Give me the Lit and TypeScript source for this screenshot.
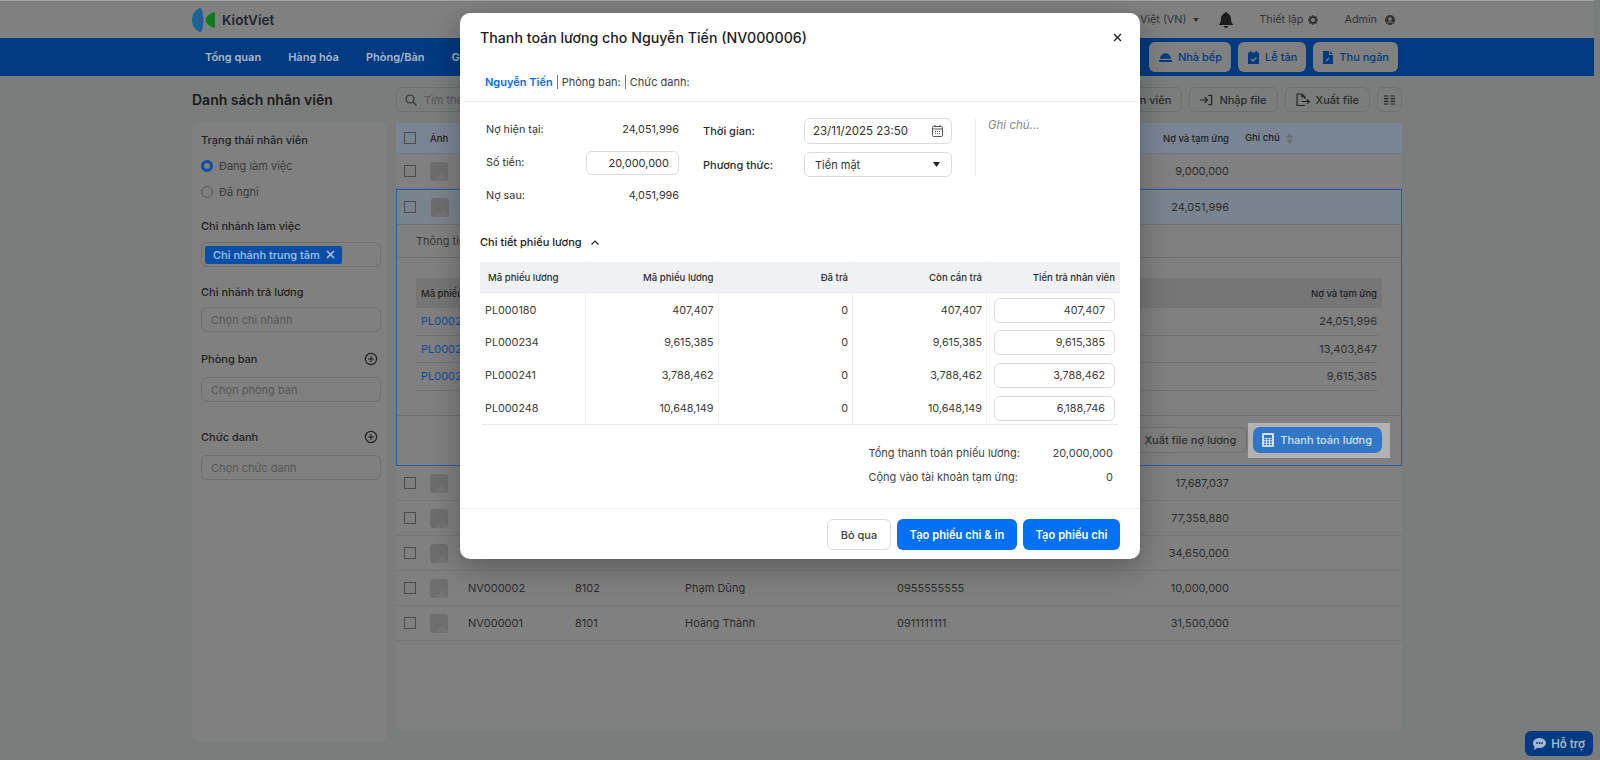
import { LitElement, html, css } from "lit";
import { customElement } from "lit/decorators.js";

const thumb = html`<span class="thumb"><svg viewBox="0 0 18 19" width="18" height="19"><path d="M5 19 L12 11 L18 17 V19Z" fill="#747474"/></svg></span>`;
const box = html`<span class="cb"></span>`;
const plus = html`<svg class="plus" viewBox="0 0 14 14" width="14" height="14" fill="none" stroke="#222" stroke-width="1.2"><circle cx="7" cy="7" r="5.6"/><path d="M7 4v6M4 7h6"/></svg>`;

const slips = [
  ["PL000180", "407,407", "0", "407,407", "407,407"],
  ["PL000234", "9,615,385", "0", "9,615,385", "9,615,385"],
  ["PL000241", "3,788,462", "0", "3,788,462", "3,788,462"],
  ["PL000248", "10,648,149", "0", "10,648,149", "6,188,746"],
];

@customElement("app-root")
export class AppRoot extends LitElement {
  static styles = css`
    :host { display: block; position: relative; width: 1600px; height: 760px; overflow: hidden; background: #7b7d7d; font-family: Inter, "Noto Sans", sans-serif; color: #262626; font-size: 11px; }
    * { box-sizing: border-box; }
    .page { width: 1594px; height: 760px; border-top: 1px solid #a2a2a2; }
    .top { height: 37px; background: #808080; display: flex; align-items: center; padding-left: 192px; }
    .logo { display: flex; align-items: center; gap: 7px; font-size: 13.5px; font-weight: 600; color: #1c2530; }
    .top-right { margin-left: auto; display: flex; align-items: center; padding-right: 199px; font-size: 10.8px; color: #333; }
    .nowrap { white-space: nowrap; }
    .lang { display: flex; align-items: center; gap: 7px; margin-right: 20px; }
    .lang i { border: 3.5px solid transparent; border-top: 4px solid #333; border-bottom: 0; width: 0; height: 0; display: block; }
    .bell { margin-right: 26px; display: block; }
    .meta { display: flex; align-items: center; gap: 5px; }
    .meta + .meta { margin-left: 26px; gap: 8px; }
    .nav { height: 38px; background: #003a80; display: flex; align-items: center; padding-left: 205px; padding-right: 196px; color: #a9b8cb; font-weight: 600; font-size: 11px; }
    .nav .links { display: flex; gap: 27px; }
    .nav .btns { margin-left: auto; display: flex; gap: 7px; }
    .nbtn { height: 30px; border-radius: 6px; background: #808080; color: #003a80; font-weight: 500; font-size: 11px; display: flex; align-items: center; gap: 6px; padding: 0 9px 0 10px; }
    .content { display: grid; grid-template-columns: 195px 1006px; column-gap: 9px; padding: 11px 0 0 192px; }
    .title { font-size: 14px; font-weight: 600; color: #1a1a1a; align-self: center; }
    .tools { display: flex; gap: 7px; height: 25px; }
    .search { flex: 1; border: 1px solid #6f7171; border-radius: 6px; display: flex; align-items: center; gap: 7px; padding-left: 8px; color: #555; }
    .tbtn { border: 1px solid #6f7171; border-radius: 6px; display: flex; align-items: center; gap: 6px; padding: 0 10px; font-weight: 500; color: #2a2a2a; font-size: 11px; }
    .tbtn.ic { padding: 0 6px; }
    .side { grid-row: 2; margin-top: 10px; height: 620px; background: #808080; border-radius: 8px; padding: 10px 6px 0 9px; }
    .lb { font-weight: 500; color: #222; height: 16px; line-height: 16px; display: flex; justify-content: space-between; align-items: center; padding-right: 3px; }
    .radio { display: flex; align-items: center; gap: 6px; color: #3c3c3c; height: 16px; margin-top: 10px; }
    .radio i { width: 12px; height: 12px; border-radius: 50%; border: 1px solid #555; display: block; }
    .radio i.on { border: 3.5px solid #0b4ea6; background: #808080; }
    .inp { height: 25px; border: 1px solid #6f7171; border-radius: 6px; display: flex; align-items: center; padding-left: 9px; color: #565656; }
    .inp.tagged { padding-left: 3px; margin-top: 8px; }
    .tag { height: 18px; background: #0b4ea6; color: #a3c4ee; border-radius: 2px; padding: 0 7px 0 8px; display: flex; align-items: center; gap: 6px; font-weight: 500; }
    .s1 { margin-top: 18px; } .s2 { margin-top: 17px; } .s3 { margin-top: 19px; } .s4 { margin-top: 27px; }
    .i2 { margin-top: 7px; } .i3 { margin-top: 10px; }
    .table { grid-row: 2; grid-column: 2; margin-top: 11px; height: 607px; background: #808080; border-radius: 0 0 6px 6px; color: #2c2c2c; }
    .row { display: grid; grid-template-columns: 26px 38px 107px 110px 212px 1fr 173px; align-items: center; height: 35px; padding-left: 8px; border-bottom: 1px solid #767878; }
    .row.head { height: 31px; background: #7a8594; font-weight: 500; font-size: 9.5px; color: #202020; border-bottom: 1px solid #6f7b8c; }
    .row .num { text-align: right; }
    .row .dual { display: flex; justify-content: space-between; }
    .row .note { padding-left: 16px; }
    .cb { width: 12px; height: 12px; border: 1px solid #4c4c4c; display: block; }
    .thumb { width: 18px; height: 19px; background: #6e6e6e; border-radius: 3px; display: block; overflow: hidden; }
    .sorti { vertical-align: middle; margin-left: 4px; }
    .exp { border: 1px solid #2f5c9f; height: 277px; }
    .exp .row { background: #7a848e; padding-left: 7px; height: 35px; border-bottom: 1px solid #727474; grid-template-columns: 27px 38px 107px 110px 212px 1fr 172px; }
    .tabs { height: 33px; padding-left: 19px; display: flex; align-items: center; color: #3a3a3a; border-bottom: 1px solid #707272; font-size: 11px; }
    .inner { margin: 20px 19px 0; color: #2e2e2e; }
    .ih { height: 30px; background: #767676; display: flex; justify-content: space-between; align-items: center; padding: 0 5px; font-weight: 500; font-size: 9.5px; color: #1f1f1f; }
    .ir { height: 27.5px; display: flex; justify-content: space-between; align-items: center; padding: 0 1px 0 5px; margin-right: 4px; border-bottom: 1px solid #727474; }
    .ir a { color: #0f4e9b; }
    .exp-foot { margin-top: 24px; border-top: 1px solid #707272; height: 50px; display: flex; justify-content: flex-end; align-items: center; padding-right: 11px; }
    .xf { height: 26px; border: 1px solid #6f7171; border-radius: 6px; display: flex; align-items: center; padding: 0 10px; font-weight: 500; color: #303030; }
    .hl { background: #b2b2b2; padding: 4px 8px 5px 5px; height: 35px; margin-left: 1px; }
    .pay { height: 26px; background: #3277c7; color: #d2e0f0; border-radius: 7px; display: flex; align-items: center; gap: 6px; padding: 0 10px 0 9px; font-weight: 500; font-size: 11px; white-space: nowrap; }
    .help { position: absolute; right: 7px; bottom: 4px; height: 25px; background: #003a80; color: #a6b7cc; border-radius: 6px; display: flex; align-items: center; gap: 5px; padding: 0 8px; font-weight: 600; font-size: 11.5px; }

    .modal { position: absolute; left: 460px; top: 13px; width: 680px; height: 546px; background: #fff; border-radius: 10px; box-shadow: 0 8px 30px rgba(0,0,0,.3); color: #333; display: flex; flex-direction: column; font-size: 10.8px; }
    .m-head { height: 49px; padding: 0 18px 0 20px; display: flex; align-items: center; justify-content: space-between; font-size: 14.2px; font-weight: 500; color: #1d1d1d; }
    .m-info { height: 40px; margin: 0 3px; padding: 1px 0 0 22px; border-bottom: 1px solid #ebedef; display: flex; align-items: center; gap: 4px; color: #3d3d3d; font-size: 11px; }
    .m-info b { color: #0070f4; font-weight: 600; }
    .m-info i { width: 1px; height: 14px; background: #777; display: block; }
    .m-form { display: flex; padding: 16px 0 0 26px; height: 129px; }
    .c1 { width: 193px; display: grid; grid-template-columns: 1fr auto; align-content: start; grid-auto-rows: 33px; align-items: center; margin-top: -5px; }
    .c1 .v { text-align: right; }
    .minp { border: 1px solid #d9dde1; border-radius: 6px; background: #fff; display: flex; align-items: center; }
    .c1 .minp { width: 93px; height: 24px; justify-content: flex-end; padding-right: 9px; font-size: 11px; }
    .c2 { margin-left: 24px; width: 249px; display: grid; grid-template-columns: 101px 148px; grid-auto-rows: min-content; row-gap: 8px; align-items: center; align-content: start; }
    .c2 label { font-weight: 500; color: #2b2b2b; font-size: 11px; }
    .c2 .minp { height: 26px; justify-content: space-between; padding: 0 8px; font-size: 11.5px; color: #333; }
    .c2 .sel { height: 25px; padding-left: 10px; font-size: 11px; }
    .c2 .sel svg { margin-right: 3px; }
    .note-m { margin-left: 23px; width: 150px; height: 58px; border-left: 1px solid #eceef0; padding-left: 12px; color: #8a8a8a; font-style: italic; line-height: 14px; font-size: 11.5px; }
    .m-sec { padding-left: 20px; height: 22px; display: flex; align-items: center; gap: 9px; font-weight: 500; color: #1d1d1d; font-size: 11px; }
    .m-table { margin: 9px 20px 0; }
    .mrow { display: grid; grid-template-columns: 105.5px 133px 134.5px 134px 133px; }
    .mrow > div { padding: 0 4px 0 5px; display: flex; align-items: center; justify-content: flex-end; border-right: 1px solid #eff0f2; }
    .mrow > div:first-child { justify-content: flex-start; }
    .mrow > div:last-child { border-right: 0; padding: 0 5px 0 0; }
    .mhead { height: 31px; background: #f0f1f3; font-size: 9.6px; font-weight: 500; color: #2d2d2d; border-bottom: 1px solid #e5e7ea; }
    .mhead > div:first-child { padding-left: 8px; }
    .mbody { padding-top: 1px; }
    .mbody .mrow { height: 32.6px; font-size: 10.8px; color: #3c3c3c; }
    .mbody .mrow > div:last-child .minp { width: 121px; height: 25px; justify-content: flex-end; padding-right: 9px; }
    .mline { height: 1px; background: #e7e9eb; margin: 0 2px; }
    .m-sum { margin: 16px 27px 0 0; display: grid; grid-template-columns: auto 93px; justify-content: end; grid-auto-rows: 23.5px; align-items: center; color: #444; font-size: 11px; }
    .m-sum span:nth-child(even) { text-align: right; }
    .m-foot { margin-top: auto; height: 51px; border-top: 1px solid #eceef0; padding: 10px 20px 0 0; display: flex; justify-content: flex-end; gap: 6px; }
    .mb { height: 31px; border-radius: 6px; display: flex; align-items: center; justify-content: center; font-size: 11.2px; font-weight: 600; background: #0070f4; color: #fff; }
    .mb.ghost { background: #fff; color: #404040; border: 1px solid #d9dde1; font-weight: 500; width: 64px; font-size: 11px; }
    .w1 { width: 120px; } .w2 { width: 97px; }
  `;

  render() {
    return html`
      <div class="page">
        <div class="top">
          <div class="logo">
            <svg width="23" height="24" viewBox="0 0 23 24"><defs><linearGradient id="lg" x1="0" x2="1"><stop offset="0" stop-color="#1a6a90"/><stop offset="1" stop-color="#2458a0"/></linearGradient></defs><path d="M9 0 C 12 4 12.500 19 9 24 C 3 23 0 18 0 12 C 0 6 3 1 9 0Z" fill="url(#lg)"/><path d="M23 4 V20 C 18 19 13.500 15 13.500 12 C 13.500 9 18 5 23 4Z" fill="#0f7a1e"/></svg>
            <span>KiotViet</span>
          </div>
          <div class="top-right">
            <div class="lang nowrap"><span>Tiếng Việt (VN)</span><i></i></div>
            <svg class="bell" width="14" height="16" viewBox="0 0 14 16"><path d="M7 0a1.2 1.2 0 0 1 1.2 1.3C10.600 2 12 4 12 6.500c0 3 .6 4.300 2 5.700v.8H0v-.8c1.400-1.400 2-2.700 2-5.700C2 4 3.400 2 5.800 1.300A1.200 1.200 0 0 1 7 0ZM5 14h4a2 2 0 0 1-4 0Z" fill="#1c1c1c"/></svg>
            <div class="meta nowrap">Thiết lập <svg width="10" height="10" viewBox="0 0 10 10"><circle cx="5" cy="5" r="3" fill="none" stroke="#333" stroke-width="2"/><path d="M5 0v2M5 8v2M0 5h2M8 5h2M1.500 1.500l1.400 1.400M7.100 7.100l1.400 1.400M8.500 1.500 7.100 2.900M1.500 8.500l1.400-1.400" stroke="#333" stroke-width="1.400"/></svg></div>
            <div class="meta nowrap">Admin <svg width="10" height="10" viewBox="0 0 10 10"><circle cx="5" cy="5" r="5" fill="#333"/><circle cx="5" cy="4" r="1.800" fill="#808080"/><path d="M2 8c.6-1.500 5.400-1.500 6 0" stroke="#808080" fill="none"/></svg></div>
          </div>
        </div>
        <div class="nav">
          <div class="links"><span>Tổng quan</span><span>Hàng hóa</span><span>Phòng/Bàn</span><span>Giao dịch</span></div>
          <div class="btns">
            <div class="nbtn"><svg width="13" height="10" viewBox="0 0 13 10"><path d="M1 6.800a5.500 5.500 0 0 1 11 0Z M0 8h13v2H0Z" fill="#003a80"/></svg>Nhà bếp</div>
            <div class="nbtn"><svg width="11" height="13" viewBox="0 0 11 13"><path d="M2 0h1.500v1.500h4V0H9v1.500h2V13H0V1.500h2Z" fill="#003a80"/><path d="M3 8l2 2 3.500-3.500" stroke="#808080" stroke-width="1.300" fill="none"/></svg>Lễ tân</div>
            <div class="nbtn"><svg width="10" height="13" viewBox="0 0 10 13"><path d="M0 0h6v4h4v9H0Z M7 0l3 3H7Z" fill="#003a80"/><path d="M3 10l3-3" stroke="#808080" stroke-width="1.300"/></svg>Thu ngân</div>
          </div>
        </div>
        <div class="content">
          <div class="title">Danh sách nhân viên</div>
          <div class="tools">
            <div class="search"><svg width="12" height="12" viewBox="0 0 12 12" fill="none" stroke="#333" stroke-width="1.200"><circle cx="5" cy="5" r="4"/><path d="M8 8l3.500 3.500"/></svg>Tìm theo mã, tên nhân viên</div>
            <div class="tbtn">Thêm nhân viên</div>
            <div class="tbtn"><svg width="13" height="12" viewBox="0 0 14 12" fill="none" stroke="#222" stroke-width="1.300"><path d="M0 6h8M5 3l3 3-3 3M9 1h3.500v10H9"/></svg>Nhập file</div>
            <div class="tbtn"><svg width="14" height="14" viewBox="0 0 14 14" fill="none" stroke="#222" stroke-width="1.100"><path d="M9 12.500H1V1h5l3 3v2M6 1v3h3M6 8.500h7.500M11 6.500l2.500 2-2.500 2"/></svg>Xuất file</div>
            <div class="tbtn ic"><svg width="11" height="10" viewBox="0 0 11 10" stroke="#222" stroke-width="1.200"><path d="M0 1h4.500M6.500 1H11M0 3.700h4.500M6.500 3.700H11M0 6.300h4.500M6.500 6.300H11M0 9h4.500M6.500 9H11"/></svg></div>
          </div>
          <div class="side">
            <div class="lb">Trạng thái nhân viên</div>
            <div class="radio"><i class="on"></i>Đang làm việc</div>
            <div class="radio"><i></i>Đã nghỉ</div>
            <div class="lb s1">Chi nhánh làm việc</div>
            <div class="inp tagged"><span class="tag">Chi nhánh trung tâm <svg width="9" height="9" viewBox="0 0 9 9" stroke="#a3c4ee" stroke-width="1.500"><path d="M1 1l7 7M8 1 1 8"/></svg></span></div>
            <div class="lb s2">Chi nhánh trả lương</div>
            <div class="inp i2">Chọn chi nhánh</div>
            <div class="lb s3">Phòng ban ${plus}</div>
            <div class="inp i3">Chọn phòng ban</div>
            <div class="lb s4">Chức danh ${plus}</div>
            <div class="inp i3">Chọn chức danh</div>
          </div>
          <div class="table">
            <div class="row head">${box}<span>Ảnh</span><span></span><span></span><span></span><span class="num">Nợ và tạm ứng</span><span class="note">Ghi chú <svg class="sorti" width="7" height="11" viewBox="0 0 7 11" fill="#6b6f75"><path d="M3.500 0 7 4.500H0ZM3.500 11 0 6.500h7Z"/></svg></span></div>
            <div class="row">${box}${thumb}<span></span><span></span><span></span><span class="num">9,000,000</span><span></span></div>
            <div class="exp">
              <div class="row">${box}${thumb}<span></span><span></span><span></span><span class="num">24,051,996</span><span></span></div>
              <div class="tabs">Thông tin</div>
              <div class="inner">
                <div class="ih"><span>Mã phiếu lương</span><span>Nợ và tạm ứng</span></div>
                <div class="ir"><a>PL000248</a><span>24,051,996</span></div>
                <div class="ir"><a>PL000241</a><span>13,403,847</span></div>
                <div class="ir"><a>PL000234</a><span>9,615,385</span></div>
              </div>
              <div class="exp-foot">
                <div class="xf">Xuất file nợ lương</div>
                <div class="hl"><div class="pay"><svg width="12" height="14" viewBox="0 0 12 14"><path d="M1 0h10a1 1 0 0 1 1 1v12a1 1 0 0 1-1 1H1a1 1 0 0 1-1-1V1a1 1 0 0 1 1-1Z" fill="#d2e0f0"/><path d="M2 2h8v3H2Z" fill="#3277c7"/><path d="M2 6.500h2M5 6.500h2M8 6.500h2M2 9h2M5 9h2M8 9h2M2 11.500h2M5 11.500h2M8 11.500h2" stroke="#3277c7" stroke-width="1.300"/></svg>Thanh toán lương</div></div>
              </div>
            </div>
            <div class="row">${box}${thumb}<span></span><span></span><span></span><span class="num">17,687,037</span><span></span></div>
            <div class="row">${box}${thumb}<span></span><span></span><span></span><span class="num">77,358,880</span><span></span></div>
            <div class="row">${box}${thumb}<span></span><span></span><span></span><span class="num">34,650,000</span><span></span></div>
            <div class="row">${box}${thumb}<span>NV000002</span><span>8102</span><span>Phạm Dũng</span><span class="num dual"><span>0955555555</span><span>10,000,000</span></span><span></span></div>
            <div class="row">${box}${thumb}<span>NV000001</span><span>8101</span><span>Hoàng Thành</span><span class="num dual"><span>0911111111</span><span>31,500,000</span></span><span></span></div>
          </div>
        </div>
      </div>

      <div class="help"><svg width="13" height="12" viewBox="0 0 13 12"><path d="M6.500 0C10 0 13 2.200 13 5s-3 5-6.500 5c-.8 0-1.500-.1-2.200-.3C3.300 10.700 1.800 12 .5 12c.8-.9 1.200-2 1.200-3C.6 8 0 6.600 0 5c0-2.800 3-5 6.500-5Z" fill="#a6b7cc"/><circle cx="4" cy="5" r=".9" fill="#003a80"/><circle cx="6.500" cy="5" r=".9" fill="#003a80"/><circle cx="9" cy="5" r=".9" fill="#003a80"/></svg>Hỗ trợ</div>

      <div class="modal">
        <div class="m-head"><span>Thanh toán lương cho Nguyễn Tiến (NV000006)</span><svg width="9" height="9" viewBox="0 0 9 9" stroke="#222" stroke-width="1.400"><path d="M1 1l7 7M8 1 1 8"/></svg></div>
        <div class="m-info"><b>Nguyễn Tiến</b><i></i><span>Phòng ban:</span><i></i><span>Chức danh:</span></div>
        <div class="m-form">
          <div class="c1">
            <span>Nợ hiện tại:</span><span class="v">24,051,996</span>
            <span>Số tiền:</span><div class="minp">20,000,000</div>
            <span>Nợ sau:</span><span class="v">4,051,996</span>
          </div>
          <div class="c2">
            <label>Thời gian:</label><div class="minp">23/11/2025 23:50<svg width="11" height="12" viewBox="0 0 11 12" fill="none" stroke="#555"><rect x=".5" y="1.500" width="10" height="10" rx="1"/><path d="M.5 4h10M3 0v2M8 0v2M3 6.500h1M5 6.500h1M7 6.500h1M3 8.500h1M5 8.500h1M7 8.500h1"/></svg></div>
            <label>Phương thức:</label><div class="minp sel">Tiền mặt<svg width="7" height="5" viewBox="0 0 7 5"><path d="M0 0h7L3.500 5Z" fill="#222"/></svg></div>
          </div>
          <div class="note-m">Ghi chú...</div>
        </div>
        <div class="m-sec"><span>Chi tiết phiếu lương</span><svg width="8" height="5" viewBox="0 0 8 5" fill="none" stroke="#222" stroke-width="1.200"><path d="M.5 4.500 4 1l3.500 3.500"/></svg></div>
        <div class="m-table">
          <div class="mrow mhead"><div>Mã phiếu lương</div><div>Mã phiếu lương</div><div>Đã trả</div><div>Còn cần trả</div><div>Tiền trả nhân viên</div></div>
          <div class="mbody">
            ${slips.map(r => html`<div class="mrow"><div>${r[0]}</div><div>${r[1]}</div><div>${r[2]}</div><div>${r[3]}</div><div><span class="minp">${r[4]}</span></div></div>`)}
          </div>
          <div class="mline"></div>
        </div>
        <div class="m-sum">
          <span>Tổng thanh toán phiếu lương:</span><span>20,000,000</span>
          <span>Cộng vào tài khoản tạm ứng:</span><span>0</span>
        </div>
        <div class="m-foot">
          <div class="mb ghost">Bỏ qua</div>
          <div class="mb w1">Tạo phiếu chi &amp; in</div>
          <div class="mb w2">Tạo phiếu chi</div>
        </div>
      </div>
    `;
  }
}
